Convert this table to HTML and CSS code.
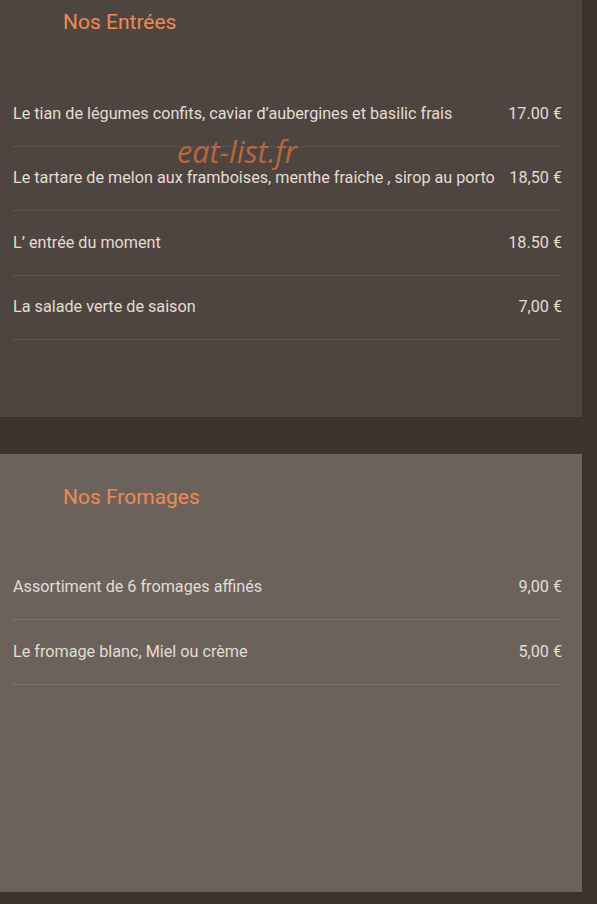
FILE: index.html
```html
<!DOCTYPE html>
<html lang="fr">
<head>
<meta charset="utf-8">
<link rel="stylesheet" href="styles.css">
</head>
<body>
<main class="page">
  <section class="panel panel-dark first">
    <h2 class="title">Nos Entrées</h2>
    <ul class="items">
      <li class="row"><span class="name">Le tian de légumes confits, caviar d’aubergines et basilic frais</span><span class="price">17.00 €</span></li>
      <li class="row"><span class="name">Le tartare de melon aux framboises, menthe fraiche , sirop au porto</span><span class="price">18,50 €</span></li>
      <li class="row"><span class="name">L’ entrée du moment</span><span class="price">18.50 €</span></li>
      <li class="row"><span class="name">La salade verte de saison</span><span class="price">7,00 €</span></li>
    </ul>
  </section>
  <section class="panel panel-light">
    <h2 class="title">Nos Fromages</h2>
    <ul class="items">
      <li class="row"><span class="name">Assortiment de 6 fromages affinés</span><span class="price">9,00 €</span></li>
      <li class="row"><span class="name">Le fromage blanc, Miel ou crème</span><span class="price">5,00 €</span></li>
    </ul>
  </section>
  <div class="watermark">eat-list.fr</div>
</main>
</body>
</html>
```
FILE: styles.css
```css
html, body {
  margin: 0;
  padding: 0;
  background: #3d332e;
}
body {
  font-family: Roboto, "Liberation Sans", sans-serif;
  overflow: hidden;
}
.page {
  position: relative;
  width: 597px;
  display: flex;
  flex-direction: column;
  gap: 37px;
}
.panel {
  width: 582px;
  height: 438px;
  box-sizing: border-box;
  padding: 31px 20px 0 13px;
}
.first {
  margin-top: -21px;
}
.panel-dark {
  background: #4f4540;
  --rule: #685e58;
}
.panel-light {
  background: #6b625c;
  --rule: #857b75;
}
.title {
  margin: 0 0 48px 50px;
  font-size: 21px;
  line-height: 24px;
  font-weight: 400;
  color: #f08a50;
}
.panel-light .title {
  margin-bottom: 46px;
}
.items {
  list-style: none;
  margin: 0;
  padding: 0;
}
.row {
  display: flex;
  justify-content: space-between;
  align-items: center;
  gap: 12px;
  padding: 21.5px 0 22px;
  line-height: 20px;
  font-size: 16.2px;
  color: #e4dbd3;
  border-bottom: 1px dotted var(--rule);
}
.panel-light .row {
  padding-top: 22px;
}
.price {
  white-space: nowrap;
}
.watermark {
  position: absolute;
  left: 177px;
  top: 132px;
  font-family: "Open Sans", sans-serif;
  font-style: italic;
  font-size: 30.5px;
  line-height: 38px;
  color: #b8663f;
}
```
